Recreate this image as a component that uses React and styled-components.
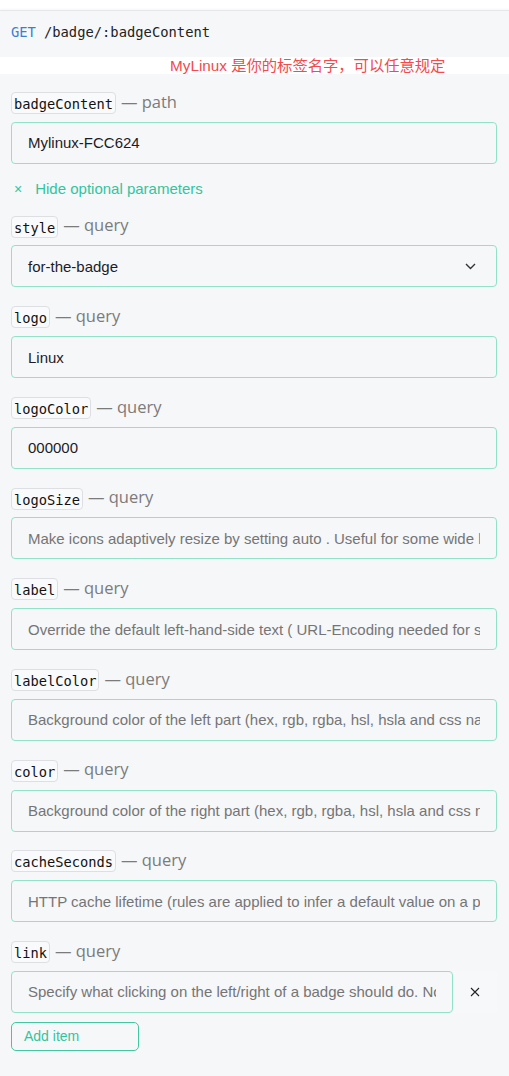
import React from "react";
import styled, { createGlobalStyle } from "styled-components";

const Global = createGlobalStyle`
  html, body { margin: 0; padding: 0; background: #ffffff; }
  body { font-family: "Liberation Sans", Arial, sans-serif; }
  * { box-sizing: border-box; }
`;

const Page = styled.div`
  padding-top: 10px;
  background: #ffffff;
`;

const Header = styled.div`
  height: 47px;
  background: #f6f7f9;
  border-top: 1px solid #e6e7ea;
  box-shadow: 0 -1px 2px rgba(0, 0, 0, 0.04);
  display: flex;
  align-items: center;
  padding: 0 0 4px 11px;
  font-family: "DejaVu Sans Mono", "Liberation Mono", monospace;
  font-size: 13.8px;
  color: #222;
`;

const Method = styled.span`
  color: #3a7fd6;
  margin-right: 8px;
`;

const Note = styled.div`
  height: 17px;
  background: #ffffff;
  padding-left: 170px;
  font-family: "Liberation Sans", "Noto Sans CJK SC", sans-serif;
  font-size: 15.3px;
  line-height: 18px;
  color: #f4494d;
  white-space: nowrap;
`;

const Form = styled.div`
  background: #f6f7f9;
  padding: 18px 12px 25px 11px;
  display: flex;
  flex-direction: column;
`;

const Field = styled.div`
  display: flex;
  flex-direction: column;
  margin-bottom: ${(p) => (p.$last ? "0" : "19px")};
`;

const LabelRow = styled.div`
  height: 21.7px;
  display: flex;
  align-items: center;
  gap: 5px;
  margin-bottom: 8px;
`;

const Chip = styled.code`
  height: 22px;
  display: inline-flex;
  align-items: center;
  padding: 2px 2px 0 2px;
  border: 1px solid #dedfe2;
  border-radius: 4px;
  background: #f9fafb;
  font-family: "DejaVu Sans Mono", "Liberation Mono", monospace;
  font-size: 13.7px;
  color: #111;
`;

const Kind = styled.span`
  font-family: "Open Sans", "Noto Sans", sans-serif;
  font-size: 16.5px;
  color: #7b7b7b;
  line-height: 1;
  margin-top: -2px;
`;

const inputBase = `
  width: 100%;
  height: 42px;
  border: 1px solid #93e1c9;
  border-radius: 4px;
  background: #f6f7f9;
  padding: 0 16px;
  font-family: "Liberation Sans", Arial, sans-serif;
  font-size: 15px;
  color: #1c1c28;
  outline: none;
`;

const Input = styled.input`
  ${inputBase}
  &::placeholder { color: #757575; opacity: 1; }
`;

const SelectBox = styled.div`
  ${inputBase}
  display: flex;
  align-items: center;
  justify-content: space-between;
  padding-right: 20px;
`;

const Toggle = styled.div`
  height: 22px;
  margin: 14px 0 16px 3px;
  display: flex;
  align-items: center;
  gap: 13px;
  color: #33c49f;
  font-size: 15px;
`;

const ToggleX = styled.span`
  font-size: 14px;
  line-height: 1;
`;

const ItemRow = styled.div`
  display: flex;
  align-items: center;
`;

const ItemInput = styled(Input)`
  width: 442px;
`;

const RemoveBtn = styled.button`
  width: 44px;
  height: 42px;
  border: none;
  background: #f7f8fa;
  display: flex;
  align-items: center;
  justify-content: center;
  padding: 0;
  color: #222;
`;

const AddBtn = styled.button`
  margin-top: 9px;
  width: 128px;
  height: 29px;
  border: 1px solid #43c7a3;
  border-radius: 5px;
  background: transparent;
  color: #33c49f;
  font-family: "Liberation Sans", Arial, sans-serif;
  font-size: 14px;
  text-align: left;
  padding: 0 0 0 12px;
`;

const Chevron = () => (
  <svg width="11" height="7" viewBox="0 0 11 7" fill="none">
    <path d="M1 1l4.5 4.5L10 1" stroke="#333" strokeWidth="1.4" />
  </svg>
);

const Cross = () => (
  <svg width="10" height="10" viewBox="0 0 10 10" fill="none">
    <path d="M1 1l8 8M9 1l-8 8" stroke="#222" strokeWidth="1.1" />
  </svg>
);

const fields = [
  { name: "logo", value: "Linux" },
  { name: "logoColor", value: "000000" },
  { name: "logoSize", placeholder: "Make icons adaptively resize by setting auto . Useful for some wide logos like amd and amg ." },
  { name: "label", placeholder: "Override the default left-hand-side text ( URL-Encoding needed for spaces or special characters!)" },
  { name: "labelColor", placeholder: "Background color of the left part (hex, rgb, rgba, hsl, hsla and css named colors supported)." },
  { name: "color", placeholder: "Background color of the right part (hex, rgb, rgba, hsl, hsla and css named colors supported)." },
  { name: "cacheSeconds", placeholder: "HTTP cache lifetime (rules are applied to infer a default value on a per-badge basis)" },
];

const Label = ({ name, kind }) => (
  <LabelRow>
    <Chip>{name}</Chip>
    <Kind>— {kind}</Kind>
  </LabelRow>
);

export default function App() {
  return (
    <Page>
      <Global />
      <Header>
        <Method>GET</Method>/badge/:badgeContent
      </Header>
      <Note>MyLinux 是你的标签名字，可以任意规定</Note>
      <Form>
        <Field $last>
          <Label name="badgeContent" kind="path" />
          <Input defaultValue="Mylinux-FCC624" />
        </Field>
        <Toggle>
          <ToggleX>×</ToggleX>
          <span>Hide optional parameters</span>
        </Toggle>
        <Field>
          <Label name="style" kind="query" />
          <SelectBox>
            <span>for-the-badge</span>
            <Chevron />
          </SelectBox>
        </Field>
        {fields.map((f) => (
          <Field key={f.name}>
            <Label name={f.name} kind="query" />
            <Input defaultValue={f.value} placeholder={f.placeholder} />
          </Field>
        ))}
        <Field $last>
          <Label name="link" kind="query" />
          <ItemRow>
            <ItemInput placeholder="Specify what clicking on the left/right of a badge should do. Note that this only works when integrating your badge in an <object> HTML tag" />
            <RemoveBtn><Cross /></RemoveBtn>
          </ItemRow>
          <AddBtn>Add item</AddBtn>
        </Field>
      </Form>
    </Page>
  );
}
